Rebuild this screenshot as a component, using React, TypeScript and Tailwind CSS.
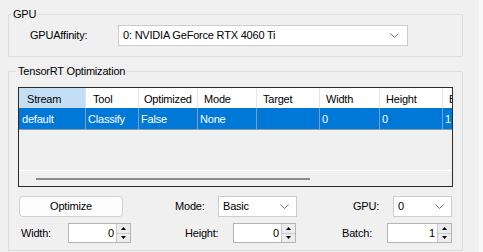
import React from "react";

const cols = [
  { h: "Stream", v: "default", w: "w-[67px]", hp: "pl-[8px]", vp: "pl-[3px]" },
  { h: "Tool", v: "Classify", w: "w-[53px]", hp: "pl-[7px]", vp: "pl-[2px]" },
  { h: "Optimized", v: "False", w: "w-[59px]", hp: "pl-[5px]", vp: "pl-[2px]" },
  { h: "Mode", v: "None", w: "w-[59px]", hp: "pl-[6px]", vp: "pl-[2px]" },
  { h: "Target", v: "", w: "w-[63px]", hp: "pl-[6px]", vp: "pl-[2px]" },
  { h: "Width", v: "0", w: "w-[60px]", hp: "pl-[6px]", vp: "pl-[2px]" },
  { h: "Height", v: "0", w: "w-[63px]", hp: "pl-[6px]", vp: "pl-[2px]" },
  { h: "Batch", v: "1", w: "w-[60px]", hp: "pl-[6px]", vp: "pl-[2px]" },
];

function Chevron() {
  return (
    <svg width="9" height="5" viewBox="0 0 9 5" className="shrink-0">
      <polyline points="0.5,0.5 4.5,4.5 8.5,0.5" fill="none" stroke="#707070" strokeWidth="1" />
    </svg>
  );
}

function Combo({ value, w, pr }: { value: string; w: string; pr: string }) {
  return (
    <div className={`${w} h-[21px] bg-white border border-[#cccccc] flex items-center justify-between pl-[4px] ${pr}`}>
      <span>{value}</span>
      <Chevron />
    </div>
  );
}

function Spin({ value, w }: { value: string; w: string }) {
  return (
    <div className={`${w} h-[20px] bg-white border border-[#b4b4b4] flex items-stretch`}>
      <div className="flex-1 flex items-center justify-end pr-[2px]">{value}</div>
      <div className="w-[14px] flex flex-col border-l border-[#c8c8c8]">
        <div className="flex-1 bg-[#ececec] flex items-center justify-center border-b border-[#c8c8c8]">
          <svg width="5" height="3" viewBox="0 0 5 3">
            <polygon points="0,3 5,3 2.5,0" fill="#000" />
          </svg>
        </div>
        <div className="flex-1 bg-[#ececec] flex items-center justify-center">
          <svg width="5" height="3" viewBox="0 0 5 3">
            <polygon points="0,0 5,0 2.5,3" fill="#000" />
          </svg>
        </div>
      </div>
    </div>
  );
}

export default function App() {
  return (
    <div
      className="w-[483px] h-[252px] bg-[#f0f0f0] flex text-[11px] leading-[13px] tracking-[-0.2px] text-black overflow-hidden"
      style={{ fontFamily: '"Liberation Sans", Arial, sans-serif' }}
    >
      <div className="w-[479px] flex flex-col">
        {/* GPU group */}
        <fieldset className="ml-[8px] mt-[8px] w-[455px] border border-[#dcdcdc]">
          <legend className="ml-[2px] px-[2px] leading-[13px]">GPU</legend>
          <div className="flex items-center pt-[4px] pb-[10px]">
            <span className="ml-[21px] w-[88px]">GPUAffinity:</span>
            <Combo value="0: NVIDIA GeForce RTX 4060 Ti" w="w-[290px]" pr="pr-[8px]" />
          </div>
        </fieldset>

        {/* TensorRT group */}
        <fieldset className="ml-[8px] mt-[8px] w-[455px] border border-[#dcdcdc] flex-1 mb-[1px]">
          <legend className="ml-[7px] px-[2px] leading-[13px]">TensorRT Optimization</legend>
          <div className="flex flex-col pl-[9px] pt-[9px]">
            {/* ListView */}
            <div className="w-[435px] h-[100px] border border-[#2b2b2b] flex flex-col overflow-hidden">
              <div className="h-[20px] bg-white flex shrink-0">
                {cols.map((c, i) => (
                  <div
                    key={c.h}
                    className={`${c.w} shrink-0 h-full flex items-center pt-[2px] border-r border-[#e5e5e5] ${c.hp} ${
                      i === 0 ? "bg-[#c4dff5]" : ""
                    }`}
                  >
                    {c.h}
                  </div>
                ))}
              </div>
              <div className="h-[22px] bg-[#0078d7] text-white flex shrink-0 border-b border-[#8a9bb0]">
                {cols.map((c) => (
                  <div key={c.h} className={`${c.w} shrink-0 h-full flex items-center pt-[2px] border-r border-[#8a9bb0] ${c.vp}`}>
                    {c.v}
                  </div>
                ))}
              </div>
              <div className="flex-1" />
              <div className="h-[16px] border-t border-white flex items-center shrink-0">
                <div className="ml-[17px] w-[274px] h-[2px] bg-[#8a8a8a]" />
              </div>
            </div>

            {/* Row 1 */}
            <div className="flex items-center mt-[9px]">
              <div className="ml-[1px] w-[104px] h-[21px] bg-[#fdfdfd] border border-[#d0d0d0] rounded-[4px] flex items-center justify-center">
                Optimize
              </div>
              <span className="ml-[52px] w-[43px]">Mode:</span>
              <Combo value="Basic" w="w-[79px]" pr="pr-[7px]" />
              <span className="ml-[56px] w-[40px]">GPU:</span>
              <Combo value="0" w="w-[59px]" pr="pr-[7px]" />
            </div>

            {/* Row 2 */}
            <div className="flex items-center mt-[6px]">
              <span className="ml-[3px] w-[47px]">Width:</span>
              <Spin value="0" w="w-[63px]" />
              <span className="ml-[54px] w-[48px]">Height:</span>
              <Spin value="0" w="w-[63px]" />
              <span className="ml-[46px] w-[45px]">Batch:</span>
              <Spin value="1" w="w-[65px]" />
            </div>
          </div>
        </fieldset>
      </div>
      <div className="w-[4px] bg-[#f9f9f9]" />
    </div>
  );
}
